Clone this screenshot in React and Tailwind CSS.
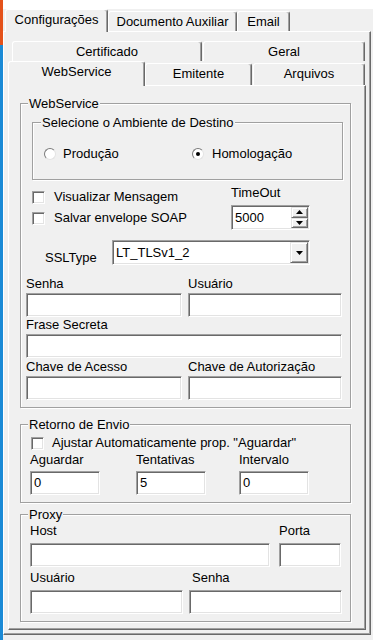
import React from 'react';

// classic win32 3D borders
const sunken =
  'bg-white border border-t-[#a0a0a0] border-l-[#a0a0a0] border-b-white border-r-white shadow-[inset_1px_1px_0_#696969,inset_-1px_-1px_0_#e3e3e3]';
const raised =
  'bg-[#f0f0f0] border border-t-[#e3e3e3] border-l-[#e3e3e3] border-b-[#696969] border-r-[#696969] shadow-[inset_1px_1px_0_#fff,inset_-1px_-1px_0_#a0a0a0]';
const sheet =
  'bg-[#f0f0f0] border border-t-white border-l-white border-b-[#696969] border-r-[#696969] shadow-[inset_-1px_-1px_0_#a0a0a0]';
const tab =
  'bg-[#f0f0f0] border-t border-l border-r border-t-white border-l-white border-r-[#696969] shadow-[inset_-1px_0_0_#a0a0a0] rounded-t-[3px] text-center pt-[2px] whitespace-nowrap';
const group =
  'relative border border-[#a0a0a0] shadow-[inset_1px_1px_0_#fff,1px_1px_0_#fff]';

const Caption = ({ children, className = 'left-[7px]' }) => (
  <span className={`absolute -top-[8px] ${className} bg-[#f0f0f0] px-[1px] leading-4 whitespace-nowrap`}>
    {children}
  </span>
);

const Edit = ({ className = '', value = '' }) => (
  <div className={`${sunken} h-[24px] flex items-center pl-[3px] ${className}`}>{value}</div>
);

const Check = () => <div className={`${sunken} w-[13px] h-[13px] shrink-0`} />;

const Radio = ({ checked }) => (
  <div className="w-[12px] h-[12px] rounded-full bg-white border border-t-[#7a7a7a] border-l-[#7a7a7a] border-b-[#e3e3e3] border-r-[#e3e3e3] flex items-center justify-center shrink-0">
    {checked && <div className="w-[4px] h-[4px] rounded-full bg-black" />}
  </div>
);

const Down = ({ w = 7, h = 4 }) => (
  <svg width={w} height={h} viewBox={`0 0 ${w} ${h}`}>
    <path d={`M0 0H${w}L${w / 2} ${h}Z`} fill="#000" />
  </svg>
);

const Up = ({ w = 7, h = 4 }) => (
  <svg width={w} height={h} viewBox={`0 0 ${w} ${h}`}>
    <path d={`M0 ${h}H${w}L${w / 2} 0Z`} fill="#000" />
  </svg>
);

const Field = ({ label, className, labelClass = '', gap = 'mt-[1px]', value }) => (
  <div className={`flex flex-col ${className}`}>
    <span className={`h-4 whitespace-nowrap ${labelClass}`}>{label}</span>
    <Edit className={gap} value={value} />
  </div>
);

export default function App() {
  return (
    <div className="w-[373px] h-[640px] flex bg-[#f0f0f0] overflow-hidden text-[13px] leading-4 text-black font-['Liberation_Sans',Arial,sans-serif]">
      <div className="w-[3px] shrink-0 flex flex-col">
        <div className="h-[45px] bg-[#e4521b]" />
        <div className="flex-1 bg-[#1b8ad6]" />
      </div>

      <div className="w-[370px] flex flex-col">
        <div className="h-[9px] bg-white" />

        {/* outer tabs */}
        <div className="flex items-end h-[23px] -mb-[1px] pl-[2px] relative z-10">
          <div className={`${tab} w-[103px] h-[23px]`}>Configurações</div>
          <div className={`${tab} w-[129px] h-[20px] mb-[1px]`}>Documento Auxiliar</div>
          <div className={`${tab} w-[53px] h-[20px] mb-[1px]`}>Email</div>
        </div>

        <div className={`${sheet} w-[368px] h-[604px] flex flex-col`}>
          {/* inner tabs, two rows */}
          <div className="flex mt-[9px] ml-[8px] h-[20px]">
            <div className={`${tab} w-[190px] h-[20px]`}>Certificado</div>
            <div className={`${tab} w-[162px] h-[20px] ml-[1px]`}>Geral</div>
          </div>
          <div className="flex items-end h-[25px] -mb-[1px] ml-[4px] relative z-10">
            <div className={`${tab} w-[137px] h-[25px]`}>WebService</div>
            <div className={`${tab} w-[107px] h-[22px] mb-[1px]`}>Emitente</div>
            <div className={`${tab} w-[112px] h-[22px] mb-[1px] ml-[1px]`}>Arquivos</div>
          </div>

          <div className={`${sheet} ml-[4px] w-[358px] h-[545px] flex flex-col`}>
            {/* WebService */}
            <div className={`${group} ml-[11px] mt-[17px] w-[331px] h-[305px] flex flex-col`}>
              <Caption>WebService</Caption>

              <div className={`${group} ml-[11px] mt-[18px] w-[311px] h-[58px] flex flex-col`}>
                <Caption className="left-[8px]">Selecione o Ambiente de Destino</Caption>
                <div className="flex items-center h-4 mt-[23px] ml-[11px]">
                  <div className="flex items-center w-[148px]">
                    <Radio />
                    <span className="ml-[7px]">Produção</span>
                  </div>
                  <div className="flex items-center">
                    <Radio checked />
                    <span className="ml-[8px]">Homologação</span>
                  </div>
                </div>
              </div>

              <div className="flex mt-[5px]">
                <div className="ml-[11px] w-[199px] pt-[4px] flex flex-col gap-[5px]">
                  <div className="flex items-center h-4">
                    <Check />
                    <span className="ml-[9px]">Visualizar Mensagem</span>
                  </div>
                  <div className="flex items-center h-4">
                    <Check />
                    <span className="ml-[9px]">Salvar envelope SOAP</span>
                  </div>
                </div>
                <div className="w-[80px] flex flex-col">
                  <span className="h-4">TimeOut</span>
                  <div className={`${sunken} mt-[4px] w-[79px] h-[25px] flex`}>
                    <span className="flex-1 pl-[3px] self-center">5000</span>
                    <div className="w-[18px] flex flex-col p-[1px] pl-0">
                      <div className={`${raised} flex-1 flex items-center justify-center`}>
                        <Up />
                      </div>
                      <div className={`${raised} flex-1 flex items-center justify-center`}>
                        <Down />
                      </div>
                    </div>
                  </div>
                </div>
              </div>

              <div className="flex mt-[10px]">
                <span className="ml-[24px] w-[67px] pt-[10px]">SSLType</span>
                <div className={`${sunken} w-[198px] h-[25px] flex`}>
                  <span className="flex-1 pl-[3px] self-center">LT_TLSv1_2</span>
                  <div className={`${raised} w-[18px] my-[1px] mr-[1px] flex items-center justify-center`}>
                    <Down />
                  </div>
                </div>
              </div>

              <div className="flex mt-[10px] ml-[5px]">
                <Field label="Senha" className="w-[156px]" />
                <Field label="Usuário" className="w-[154px] ml-[6px]" />
              </div>
              <Field label="Frase Secreta" className="w-[316px] ml-[5px]" />
              <div className="flex mt-[1px] ml-[5px]">
                <Field label="Chave de Acesso" className="w-[156px]" />
                <Field label="Chave de Autorização" className="w-[154px] ml-[6px]" />
              </div>
            </div>

            {/* Retorno de Envio */}
            <div className={`${group} ml-[11px] mt-[16px] w-[331px] h-[79px] flex flex-col`}>
              <Caption>Retorno de Envio</Caption>
              <div className="flex items-center h-4 mt-[10px] ml-[10px]">
                <Check />
                <span className="ml-[8px]">Ajustar Automaticamente prop. "Aguardar"</span>
              </div>
              <div className="flex mt-[1px] ml-[9px]">
                <Field label="Aguardar" className="w-[70px]" gap="mt-[3px]" value="0" />
                <Field label="Tentativas" className="w-[70px] ml-[36px]" gap="mt-[3px]" value="5" />
                <Field label="Intervalo" className="w-[70px] ml-[33px]" gap="mt-[3px]" value="0" />
              </div>
            </div>

            {/* Proxy */}
            <div className={`${group} ml-[11px] mt-[11px] w-[331px] h-[108px] flex flex-col`}>
              <Caption>Proxy</Caption>
              <div className="flex mt-[8px] ml-[9px]">
                <Field label="Host" className="w-[240px]" gap="mt-[4px]" />
                <Field label="Porta" className="w-[62px] ml-[9px]" gap="mt-[4px]" />
              </div>
              <div className="flex mt-[3px] ml-[9px]">
                <Field label="Usuário" className="w-[153px]" gap="mt-[4px]" />
                <Field label="Senha" className="w-[153px] ml-[6px]" labelClass="pl-[3px]" gap="mt-[4px]" />
              </div>
            </div>
          </div>
        </div>
      </div>
    </div>
  );
}
